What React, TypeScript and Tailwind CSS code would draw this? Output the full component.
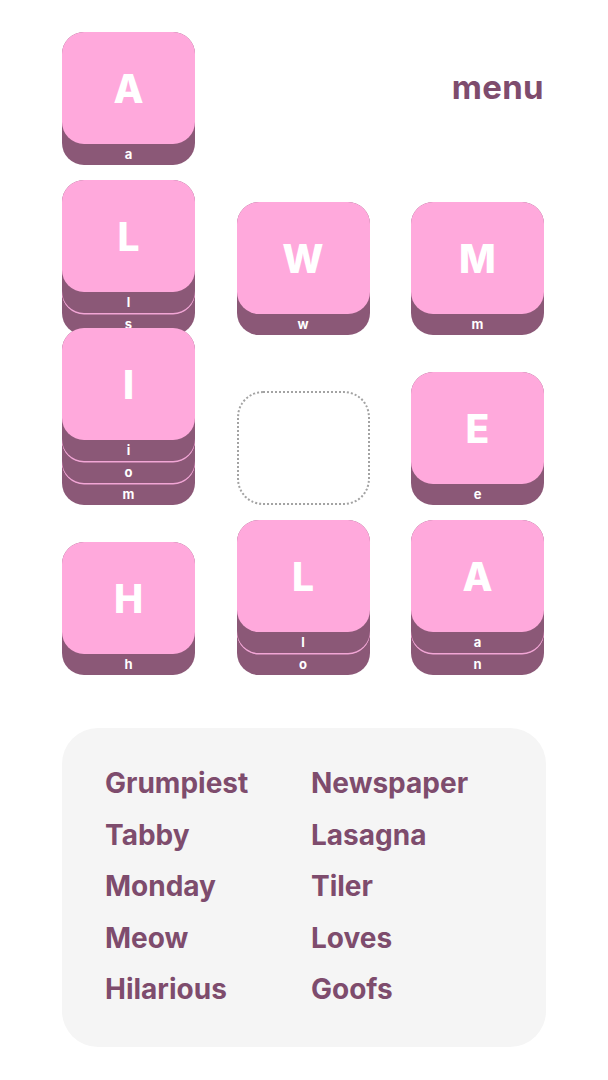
import React from 'react';

type Stack = { col: number; row: number; letters: string[] } | { col: number; row: number; empty: true };

const stacks: Stack[] = [
  { col: 1, row: 1, letters: ['a'] },
  { col: 1, row: 2, letters: ['l', 's'] },
  { col: 1, row: 3, letters: ['i', 'o', 'm'] },
  { col: 1, row: 4, letters: ['h'] },
  { col: 2, row: 2, letters: ['w'] },
  { col: 2, row: 3, empty: true },
  { col: 2, row: 4, letters: ['l', 'o'] },
  { col: 3, row: 2, letters: ['m'] },
  { col: 3, row: 3, letters: ['e'] },
  { col: 3, row: 4, letters: ['a', 'n'] },
];

const words = [
  ['Grumpiest', 'Newspaper'],
  ['Tabby', 'Lasagna'],
  ['Monday', 'Tiler'],
  ['Meow', 'Loves'],
  ['Hilarious', 'Goofs'],
];

const colClass: Record<number, string> = { 1: 'col-start-1', 2: 'col-start-2', 3: 'col-start-3' };
const rowClass: Record<number, string> = { 1: 'row-start-1', 2: 'row-start-2', 3: 'row-start-3', 4: 'row-start-4' };

function Tile({ letters }: { letters: string[] }) {
  return (
    <div className="relative isolate flex flex-col">
      {letters.map((l, i) => (
        <div
          key={i}
          className={`relative h-[133px] w-[133px] rounded-[22px] bg-[#8b5877] ${i > 0 ? '-mt-[111px]' : ''} ${
            i < letters.length - 1 ? 'shadow-[0_1.5px_0_0_#f2a6d6]' : ''
          }`}
          style={{ zIndex: letters.length - i }}
        >
          <div className="flex h-[112px] items-center justify-center rounded-[22px] bg-[#ffa9dc]">
            {i === 0 && (
              <span className="text-[39px] font-extrabold leading-none text-white">{l.toUpperCase()}</span>
            )}
          </div>
          <div className="flex h-[21px] items-center justify-center text-[13px] font-bold leading-none text-white">
            {l}
          </div>
        </div>
      ))}
    </div>
  );
}

export default function App() {
  return (
    <div className="min-h-[1080px] bg-white px-[62px] font-['Inter','Liberation_Sans',sans-serif]">
      <div className="grid w-[482px] grid-cols-[133px_133px_133px] grid-rows-[165px_170px_170px_170px] justify-between">
        {stacks.map((s, i) => (
          <div key={i} className={`${colClass[s.col]} ${rowClass[s.row]} self-end`}>
            {'empty' in s ? (
              <div className="h-[114px] w-[133px] rounded-[26px] border-2 border-dotted border-[#a3a3a3]" />
            ) : (
              <Tile letters={s.letters} />
            )}
          </div>
        ))}
        <div className="col-start-3 row-start-1 mt-[71px] self-start text-right text-[33px] font-bold leading-none tracking-[0.01em] text-[#7e4c6d]">
          menu
        </div>
      </div>

      <div className="mt-[53px] h-[319px] rounded-[36px] bg-[#f5f5f5] px-[43px] pt-[30px]">
        <div className="grid grid-cols-[206px_1fr]">
          {words.map(([a, b]) => (
            <React.Fragment key={a}>
              <div className="text-[28px] font-bold leading-[51.5px] text-[#7e4c6d]">{a}</div>
              <div className="text-[28px] font-bold leading-[51.5px] text-[#7e4c6d]">{b}</div>
            </React.Fragment>
          ))}
        </div>
      </div>
    </div>
  );
}
